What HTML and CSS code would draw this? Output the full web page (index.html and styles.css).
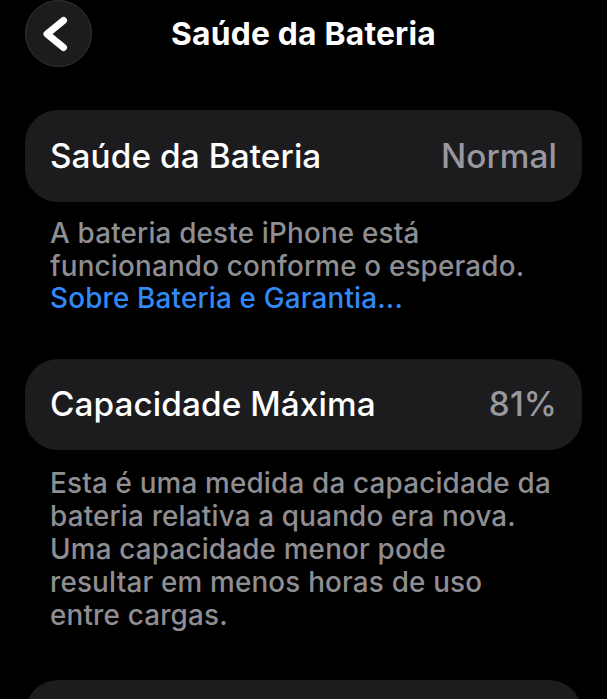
FILE: index.html
```html
<!DOCTYPE html>
<html lang="pt-BR">
<head>
<meta charset="utf-8">
<title>Saúde da Bateria</title>
<link rel="stylesheet" href="styles.css">
</head>
<body>
<div class="screen">
  <header class="nav">
    <button class="back" aria-label="Voltar">
      <svg viewBox="0 0 67 67" width="67" height="67">
        <path d="M38.5 20.5 L22 34 L38.5 47.5" fill="none" stroke="#fff" stroke-width="7" stroke-linecap="round" stroke-linejoin="round"/>
      </svg>
    </button>
    <h1 class="title">Saúde da Bateria</h1>
    <span class="nav-spacer"></span>
  </header>

  <section class="card card-first">
    <span class="card-label">Saúde da Bateria</span>
    <span class="card-value">Normal</span>
  </section>
  <p class="note">A bateria deste iPhone está<br>funcionando conforme o esperado.<br><a class="link" href="#">Sobre Bateria e Garantia...</a></p>

  <section class="card card-second">
    <span class="card-label">Capacidade Máxima</span>
    <span class="card-value">81%</span>
  </section>
  <p class="note note-second">Esta é uma medida da capacidade da<br>bateria relativa a quando era nova.<br>Uma capacidade menor pode<br>resultar em menos horas de uso<br>entre cargas.</p>

  <section class="card card-third"></section>
</div>
</body>
</html>
```

FILE: styles.css
```css
* { box-sizing: border-box; }
html, body {
  margin: 0;
  padding: 0;
  background: #000;
  height: 100%;
  overflow: hidden;
}
body {
  font-family: Inter, "Liberation Sans", Arial, sans-serif;
  color: #fff;
}
.screen {
  padding: 0 25px;
  display: flex;
  flex-direction: column;
}
.nav {
  display: grid;
  grid-template-columns: 67px 1fr 67px;
  align-items: center;
  height: 67px;
}
.back {
  width: 67px;
  height: 67px;
  padding: 0;
  margin: 0;
  border-radius: 50%;
  background: #1c1c1e;
  border: 1px solid #343436;
  display: flex;
  align-items: center;
  justify-content: center;
}
.back svg { display: block; margin: -1px; }
.title {
  margin: 0;
  text-align: center;
  font-size: 31.8px;
  font-weight: 700;
  line-height: 36px;
  letter-spacing: 0.2px;
  padding-top: 1px;
}
.card {
  background: #1c1c1e;
  border-radius: 33px;
  height: 92px;
  padding: 0 25px;
  display: flex;
  align-items: center;
  justify-content: space-between;
  font-size: 33.3px;
  font-weight: 500;
  letter-spacing: 0.1px;
}
.card-first { margin-top: 43px; }
.card-second { margin-top: 44px; height: 91px; }
.card-third { margin-top: 48px; height: 92px; }
.card-label { color: #fff; }
.card-value { color: #98989e; }
.note {
  margin: 15px 0 0;
  padding: 0 25px;
  font-size: 27.8px;
  font-weight: 500;
  line-height: 32.5px;
  color: #8e8e93;
  letter-spacing: 0.2px;
}
.note-second { margin-top: 17px; line-height: 33px; }
.link {
  color: #3189f5;
  text-decoration: none;
}
```
